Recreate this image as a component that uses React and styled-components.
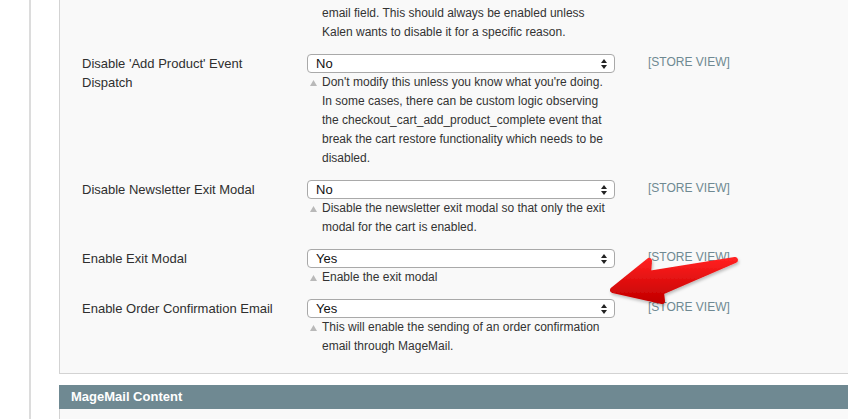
import React from 'react';
import styled, { createGlobalStyle } from 'styled-components';

const Global = createGlobalStyle`
  html, body { margin: 0; padding: 0; background: #fff; overflow: hidden; }
  body { font-family: "Liberation Sans", Arial, Helvetica, sans-serif; }
`;

const Page = styled.div`
  position: relative;
  width: 848px;
  height: 419px;
  overflow: hidden;
  background: #fff;
`;

const Frame = styled.div`
  margin-left: 29px;
  border-left: 2px solid #dcdcdc;
  padding-left: 28px;
  height: 100%;
`;

const Panel = styled.div`
  width: 900px;
  background: #f9f9f9;
  border: 1px solid #d3d3d3;
  border-top: none;
  padding: 0 0 11px 22px;
  box-sizing: border-box;
`;

const Row = styled.div`
  display: grid;
  grid-template-columns: 225px 308px auto;
  padding: ${p => (p.$first ? '4px 0 6px' : '6px 0')};
  font-size: 13px;
  line-height: 19px;
  color: #2f2f2f;
`;

const Label = styled.div`
  white-space: nowrap;
  color: #2f2f2f;
`;

const Value = styled.div`
  display: flex;
  flex-direction: column;
`;

const Select = styled.div`
  height: 19px;
  box-sizing: border-box;
  border: 1px solid #a9a9a9;
  border-radius: 4px;
  background: #fff;
  display: flex;
  align-items: center;
  justify-content: space-between;
  padding: 0 7px 0 8px;
  font-size: 13px;
  color: #111;
  line-height: 17px;
`;

const Note = styled.div`
  display: grid;
  grid-template-columns: 15px 1fr;
  font-size: 12px;
  color: #333;
  white-space: nowrap;
`;

const NoteMark = styled.span`
  display: flex;
  justify-content: flex-start;
  padding: 7px 0 0 3px;
  height: 19px;
  box-sizing: border-box;
`;

const Scope = styled.div`
  margin-left: 33px;
  font-size: 12px;
  line-height: 16px;
  color: #6f8992;
  white-space: nowrap;
`;

const Head = styled.div`
  margin-top: 11px;
  width: 900px;
  height: 24px;
  line-height: 24px;
  background: #6f8992;
  color: #fff;
  font-weight: bold;
  font-size: 13px;
  padding-left: 12px;
  box-sizing: border-box;
`;

const Body = styled.div`
  width: 900px;
  height: 40px;
  background: #f9f9f9;
  border-left: 1px solid #d3d3d3;
  box-sizing: border-box;
`;

const Overlay = styled.svg`
  position: absolute;
  left: 600px;
  top: 245px;
  overflow: visible;
`;

const Updown = () => (
  <svg width="6" height="10" viewBox="0 0 6 10">
    <path d="M0 4 L3 0 L6 4 Z M0 6 L3 10 L6 6 Z" fill="#222" />
  </svg>
);

const Tri = () => (
  <svg width="7" height="6" viewBox="0 0 7 6">
    <path d="M0 6 L3.5 0 L7 6 Z" fill="#b9b9b9" />
  </svg>
);

const NoteBlock = ({ lines, mark = true }) => (
  <Note>
    <NoteMark>{mark ? <Tri /> : null}</NoteMark>
    <div>
      {lines.map((l, i) => (
        <div key={i}>{l}</div>
      ))}
    </div>
  </Note>
);

const rows = [
  {
    label: ["Disable 'Add Product' Event", 'Dispatch'],
    value: 'No',
    note: [
      "Don't modify this unless you know what you're doing.",
      'In some cases, there can be custom logic observing',
      'the checkout_cart_add_product_complete event that',
      'break the cart restore functionality which needs to be',
      'disabled.',
    ],
  },
  {
    label: ['Disable Newsletter Exit Modal'],
    value: 'No',
    note: [
      'Disable the newsletter exit modal so that only the exit',
      'modal for the cart is enabled.',
    ],
  },
  {
    label: ['Enable Exit Modal'],
    value: 'Yes',
    note: ['Enable the exit modal'],
  },
  {
    label: ['Enable Order Confirmation Email'],
    value: 'Yes',
    note: [
      'This will enable the sending of an order confirmation',
      'email through MageMail.',
    ],
  },
];

export default function App() {
  return (
    <>
      <Global />
      <Page>
        <Frame>
          <Panel>
            <Row $first>
              <Label />
              <Value>
                <NoteBlock
                  mark={false}
                  lines={[
                    'email field. This should always be enabled unless',
                    'Kalen wants to disable it for a specific reason.',
                  ]}
                />
              </Value>
              <Scope />
            </Row>
            {rows.map((r, i) => (
              <Row key={i}>
                <Label>
                  {r.label.map((l, j) => (
                    <div key={j}>{l}</div>
                  ))}
                </Label>
                <Value>
                  <Select>
                    <span>{r.value}</span>
                    <Updown />
                  </Select>
                  <NoteBlock lines={r.note} />
                </Value>
                <Scope>[STORE VIEW]</Scope>
              </Row>
            ))}
          </Panel>
          <Head>MageMail Content</Head>
          <Body />
        </Frame>
        <Overlay width="150" height="70" viewBox="600 245 150 70">
          <defs>
            <linearGradient id="rg" x1="0" y1="0" x2="0" y2="1">
              <stop offset="0" stopColor="#ff2020" />
              <stop offset="1" stopColor="#c40000" />
            </linearGradient>
            <filter id="sh" x="-20%" y="-20%" width="140%" height="160%">
              <feDropShadow dx="1" dy="2" stdDeviation="1.5" floodColor="#000" floodOpacity="0.25" />
            </filter>
          </defs>
          <path
            d="M613 290 L649 261 L648 274 L735 260 L661 292 L662 301 Z"
            fill="url(#rg)"
            stroke="url(#rg)"
            strokeWidth="6"
            strokeLinejoin="round"
            filter="url(#sh)"
          />
        </Overlay>
      </Page>
    </>
  );
}
